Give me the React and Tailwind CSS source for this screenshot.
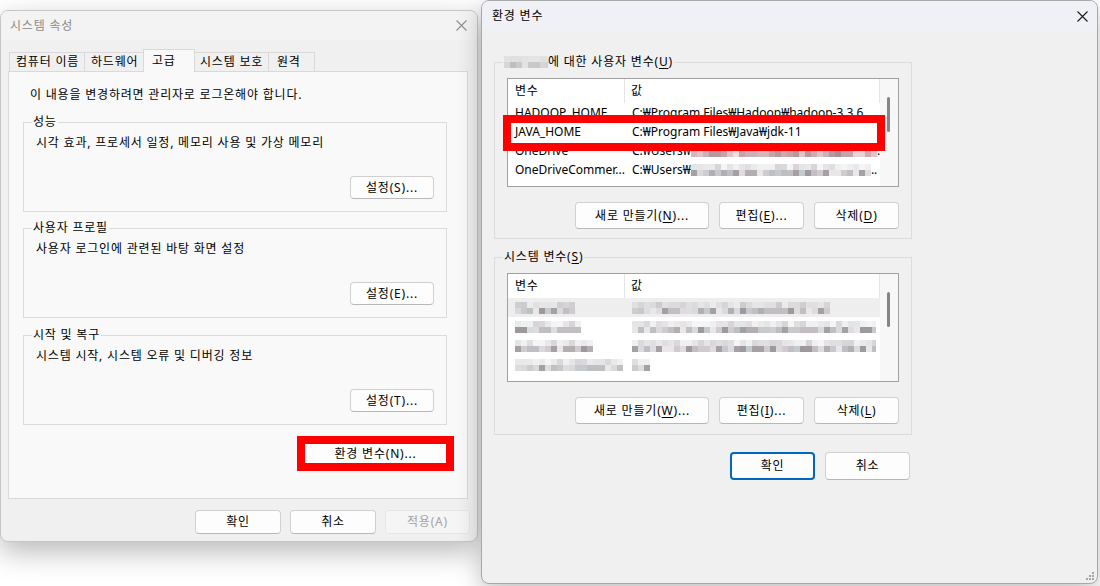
import React from 'react';

const grays = ['bg-[#dedcde]', 'bg-[#cfcbce]', 'bg-[#c2bec1]', 'bg-[#b3aeb2]', 'bg-[#a5a0a4]', 'bg-[#d8dadd]', 'bg-[#c6cacf]', 'bg-[#eae7e8]', 'bg-[#bcc0c2]', 'bg-[#9d999c]'];
const pinks = ['bg-[#e8d2d5]', 'bg-[#d6b6bb]', 'bg-[#c5a3a8]', 'bg-[#b7989c]', 'bg-[#e2c3c8]', 'bg-[#d1a9af]', 'bg-[#efdee0]', 'bg-[#a88f93]', 'bg-[#c9b0bd]'];
const lights = ['bg-[#d6d6d6]', 'bg-[#c9c9c9]', 'bg-[#e3e3e3]', 'bg-[#bebebe]', 'bg-[#cfcfcf]'];
const palettes = { gray: grays, pink: pinks, light: lights };

// pixelated "blurred" text
function Blur({ width, seed = 1, tone = 'gray' }) {
   const palette = palettes[tone];
   const count = Math.ceil(width / 6);
   let s = seed * 7919 + 13;
   const pick = () => {
      s = (s * 9301 + 49297) % 233280;
      return palette[Math.floor((s / 233280) * palette.length)];
   };
   const top = Array.from({ length: count }, pick);
   const bottom = Array.from({ length: count }, pick);
   return (
      <div className="flex flex-col shrink-0 overflow-hidden" style={{ width }}>
         <div className="flex opacity-40">
            {top.map((c, i) => <div key={i} className={`w-[6px] h-[6px] shrink-0 ${c}`} />)}
         </div>
         <div className="flex">
            {bottom.map((c, i) => <div key={i} className={`w-[6px] h-[6px] shrink-0 ${c}`} />)}
         </div>
      </div>
   );
}

function CloseIcon({ color }) {
   return (
      <svg width="11" height="11" viewBox="0 0 11 11" fill="none" stroke={color} strokeWidth="1.1">
         <path d="M0.5 0.5 L10.5 10.5 M10.5 0.5 L0.5 10.5" />
      </svg>
   );
}

function Btn({ children, className = '', disabled, primary }) {
   let look = 'border border-[#d0d0d0] border-b-[#b8b8b8] bg-[#fdfdfd]';
   if (primary) look = 'border-2 border-[#0067c0] bg-[#fdfdfd]';
   if (disabled) look = 'border border-[#e6e6e6] bg-[#f5f5f5] text-[#a3a3a3]';
   return (
      <button type="button" className={`flex items-center justify-center rounded-[4px] leading-[16px] tracking-[0.8px] ${look} ${className}`}>
         {children}
      </button>
   );
}

function GroupBox({ label, children, className = '', labelBg }) {
   return (
      <div className={`relative border border-[#dcdcdc] flex flex-col ${className}`}>
         <div className={`absolute -top-[9px] left-[8px] px-[1px] leading-[16px] flex items-center ${labelBg}`}>{label}</div>
         {children}
      </div>
   );
}

function SystemProperties() {
   const tabs = [
      { label: '컴퓨터 이름', w: 'w-[76px]', pl: 'pl-[6px]' },
      { label: '하드웨어', w: 'w-[60px]', pl: 'pl-[6px]' },
      { label: '고급', w: 'w-[52px]', pl: 'pl-[8px]', active: true },
      { label: '시스템 보호', w: 'w-[75px]', pl: 'pl-[5px]' },
      { label: '원격', w: 'w-[47px]', pl: 'pl-[8px]' },
   ];

   const groups = [
      { label: '성능', text: '시각 효과, 프로세서 일정, 메모리 사용 및 가상 메모리', btn: '설정(S)...', mt: 'mt-[19px]' },
      { label: '사용자 프로필', text: '사용자 로그인에 관련된 바탕 화면 설정', btn: '설정(E)...', mt: 'mt-[16px]' },
      { label: '시작 및 복구', text: '시스템 시작, 시스템 오류 및 디버깅 정보', btn: '설정(T)...', mt: 'mt-[17px]' },
   ];

   return (
      <div className="absolute left-0 top-[10px] w-[478px] h-[532px] rounded-[8px] border border-[#c6c6c6] bg-[#f0f0f0] shadow-[0_10px_28px_rgba(0,0,0,0.28)] overflow-hidden flex flex-col">
         <div className="h-[29px] shrink-0 bg-[#f3f3f3] flex items-center justify-between pl-[9px] pr-[10px]">
            <span className="text-[#8a8a8a] leading-[16px]">시스템 속성</span>
            <CloseIcon color="#8f8f8f" />
         </div>

         <div className="pl-[7px] flex flex-col">
            <div className="flex items-end mt-[9px] ml-[1px]">
               {tabs.map((t, i) => (
                  <div
                     key={t.label}
                     className={`${t.w} ${t.pl} ${i > 0 ? '-ml-px' : ''} flex items-center border border-[#d9d9d9] border-b-0 leading-[16px] ${t.active ? 'h-[23px] -mb-px relative z-10 bg-[#f9f9f9]' : 'h-[19px] bg-[#f0f0f0]'}`}
                  >
                     {t.label}
                  </div>
               ))}
            </div>

            <div className="w-[460px] h-[428px] border border-[#d9d9d9] bg-[#f9f9f9] flex flex-col">
               <p className="pl-[21px] pt-[15px] leading-[16px]">이 내용을 변경하려면 관리자로 로그온해야 합니다.</p>

               {groups.map((g) => (
                  <GroupBox key={g.label} label={g.label} labelBg="bg-[#f9f9f9]" className={`ml-[14px] w-[424px] h-[90px] ${g.mt}`}>
                     <p className="pl-[12px] pt-[12px] leading-[16px]">{g.text}</p>
                     <div className="mt-auto flex justify-end pr-[12px] pb-[12px]">
                        <Btn className="w-[84px] h-[23px]">{g.btn}</Btn>
                     </div>
                  </GroupBox>
               ))}

               <div className="self-end mr-[13px] mt-[11px] relative w-[157px] h-[35px] flex items-center justify-center">
                  <Btn className="w-[151px] h-[23px]">환경 변수(N)...</Btn>
                  <div className="absolute inset-0 border-[8px] border-[#ff0000]" />
               </div>
            </div>

            <div className="flex justify-end gap-[9px] pr-[7px] mt-[11px]">
               <Btn className="w-[86px] h-[24px]">확인</Btn>
               <Btn className="w-[86px] h-[24px]">취소</Btn>
               <Btn disabled className="w-[85px] h-[24px]">적용(A)</Btn>
            </div>
         </div>
      </div>
   );
}

function Mn({ children }) {
   return <u className="underline-offset-[2px]">{children}</u>;
}

function VarList({ children, overlay }) {
   return (
      <div className="relative ml-[12px] mt-[15px] w-[392px] h-[109px]">
         <div className="w-full h-full border border-[#a0a0a0] bg-white flex overflow-hidden">
            <div className="w-[372px] flex flex-col">
               <div className="h-[24px] shrink-0 flex leading-[16px]">
                  <div className="w-[117px] pl-[7px] flex items-center border-r border-[#e5e5e5]">변수</div>
                  <div className="flex-1 pl-[6px] flex items-center border-r border-[#e5e5e5]">값</div>
               </div>
               {children}
            </div>
            <div className="flex-1 bg-[#f7f7f7] pt-[18px] pl-[7px]">
               <div className="w-[3px] h-[35px] rounded-full bg-[#858585]" />
            </div>
         </div>
         {overlay}
      </div>
   );
}

function Row({ name, children, selected }) {
   return (
      <div className={`h-[19px] shrink-0 flex items-center leading-[16px] tracking-normal whitespace-nowrap ${selected ? 'bg-[#eeeeee]' : ''}`}>
         <div className="w-[117px] pl-[7px] overflow-hidden flex items-center">{name}</div>
         <div className="flex-1 pl-[7px] overflow-hidden flex items-center">{children}</div>
      </div>
   );
}

function EnvironmentVariables() {
   const sysRows = [
      { nw: 60, vw: 198, sel: true },
      { nw: 66, vw: 244 },
      { nw: 78, vw: 244 },
      { nw: 108, vw: 18 },
   ];

   return (
      <div className="absolute left-[481px] top-0 w-[617px] h-[584px] rounded-[8px] border border-[#a8a8a8] bg-[#f0f0f0] shadow-[0_8px_24px_rgba(0,0,0,0.25)] overflow-hidden flex flex-col">
         <div className="h-[30px] shrink-0 bg-[#eff1f6] flex items-center justify-between pl-[10px] pr-[9px]">
            <span className="leading-[16px]">환경 변수</span>
            <CloseIcon color="#1a1a1a" />
         </div>

         <div className="pl-[12px] flex flex-col">
            <GroupBox
               labelBg="bg-[#f0f0f0]"
               className="mt-[31px] w-[418px] h-[177px]"
               label={<><Blur width={44} seed={3} tone="light" /><span>에 대한 사용자 변수(<Mn>U</Mn>)</span></>}
            >
               <VarList overlay={<div className="absolute -left-[4px] top-[37px] w-[382px] h-[36px] border-[8px] border-[#ff0000]" />}>
                  <Row name="HADOOP_HOME">C:₩Program Files₩Hadoop₩hadoop-3.3.6</Row>
                  <Row name="JAVA_HOME">C:₩Program Files₩Java₩jdk-11</Row>
                  <Row name="OneDrive">
                     <span>C:₩Users₩</span>
                     <Blur width={186} seed={7} tone="pink" />
                     <span>.</span>
                  </Row>
                  <Row name="OneDriveCommer...">
                     <span>C:₩Users₩</span>
                     <Blur width={180} seed={11} />
                     <span>..</span>
                  </Row>
               </VarList>
               <div className="flex justify-end gap-[10px] pr-[12px] mt-[15px]">
                  <Btn className="w-[134px] h-[27px]">새로 만들기(<Mn>N</Mn>)...</Btn>
                  <Btn className="w-[85px] h-[27px]">편집(<Mn>E</Mn>)...</Btn>
                  <Btn className="w-[85px] h-[27px]">삭제(<Mn>D</Mn>)</Btn>
               </div>
            </GroupBox>

            <GroupBox labelBg="bg-[#f0f0f0]" className="mt-[18px] w-[418px] h-[178px]" label={<span>시스템 변수(<Mn>S</Mn>)</span>}>
               <VarList>
                  {sysRows.map((r, i) => (
                     <Row key={i} selected={r.sel} name={<Blur width={r.nw} seed={20 + i} />}>
                        <Blur width={r.vw} seed={40 + i} />
                     </Row>
                  ))}
               </VarList>
               <div className="flex justify-end gap-[10px] pr-[12px] mt-[15px]">
                  <Btn className="w-[134px] h-[27px]">새로 만들기(<Mn>W</Mn>)...</Btn>
                  <Btn className="w-[85px] h-[27px]">편집(<Mn>I</Mn>)...</Btn>
                  <Btn className="w-[85px] h-[27px]">삭제(<Mn>L</Mn>)</Btn>
               </div>
            </GroupBox>

            <div className="w-[418px] flex justify-end gap-[10px] pr-[2px] mt-[17px]">
               <Btn primary className="w-[85px] h-[28px]">확인</Btn>
               <Btn className="w-[85px] h-[28px]">취소</Btn>
            </div>
         </div>

         <div className="mt-auto self-end mr-[3px] mb-[3px]">
            <svg width="9" height="9" viewBox="0 0 9 9" fill="#a6a6a6">
               <rect x="7" y="1" width="2" height="2" />
               <rect x="4" y="4" width="2" height="2" />
               <rect x="7" y="4" width="2" height="2" />
               <rect x="1" y="7" width="2" height="2" />
               <rect x="4" y="7" width="2" height="2" />
               <rect x="7" y="7" width="2" height="2" />
            </svg>
         </div>
      </div>
   );
}

const App = () => {
   return (
      <div className="relative w-[1100px] h-[586px] overflow-hidden bg-white text-[12px] text-black tracking-[0.8px] font-['Noto_Sans','Noto_Sans_CJK_KR',sans-serif]">
         <SystemProperties />
         <EnvironmentVariables />
      </div>
   );
};

export default App;
